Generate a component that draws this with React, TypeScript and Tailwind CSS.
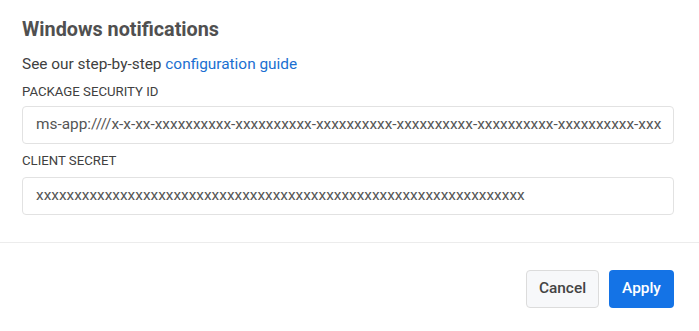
export default function App() {
  const packageId =
    "ms-app:////x-x-xx-xxxxxxxxxx-xxxxxxxxxx-xxxxxxxxxx-xxxxxxxxxx-xxxxxxxxxx-xxxxxxxxxx-xxx";
  const secret = "x".repeat(64);

  return (
    <div className="w-[699px] h-[331px] bg-white font-['Roboto',sans-serif] text-[#333]">
      <div className="pl-[22px] pr-[25px] pt-[16px] pb-[27px]">
        <h2 className="text-[19.8px] leading-[28px] font-bold text-[#505050]">Windows notifications</h2>
        <p className="mt-[9px] text-[15.4px] leading-[22px] text-[#404040]">
          See our step-by-step <span className="text-[#1a6fd1]">configuration guide</span>
        </p>

        {/* Package security id */}
        <div className="mt-[8px] text-[13.2px] leading-[18px] uppercase text-[#404040]">Package security ID</div>
        <div className="mt-[5px] h-[38px] flex items-center px-[13px] border border-[#e2e2e2] rounded-[4px] overflow-hidden">
          <span className="whitespace-nowrap text-[15.4px] text-[#555]">{packageId}</span>
        </div>

        {/* Client secret */}
        <div className="mt-[8px] text-[13.2px] leading-[18px] uppercase text-[#404040]">Client secret</div>
        <div className="mt-[7px] h-[38px] flex items-center px-[13px] border border-[#e2e2e2] rounded-[4px] overflow-hidden">
          <span className="whitespace-nowrap text-[15.4px] text-[#555]">{secret}</span>
        </div>
      </div>

      <div className="border-t border-[#ececec]" />

      <div className="flex justify-end gap-[10px] pr-[25px] pt-[27px]">
        <button className="h-[38px] w-[73px] rounded-[4px] border border-[#dcdcdc] bg-[#f7f8fa] text-[15.4px] font-medium text-[#444]">
          Cancel
        </button>
        <button className="h-[38px] w-[65px] rounded-[4px] bg-[#1473e6] text-[15.4px] font-medium text-white">
          Apply
        </button>
      </div>
    </div>
  );
}
